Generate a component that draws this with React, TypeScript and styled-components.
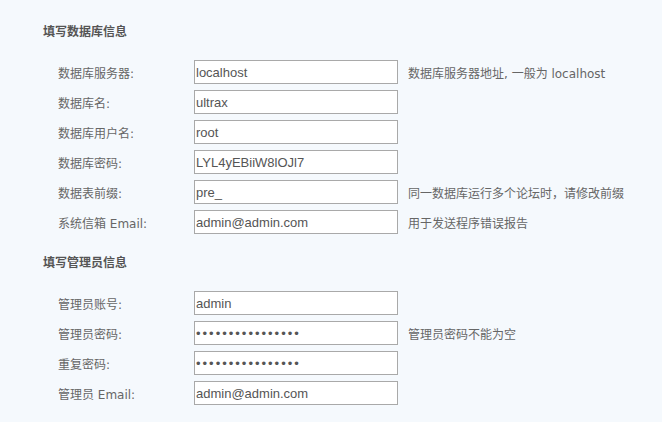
import React from "react";
import styled, { createGlobalStyle } from "styled-components";

const Global = createGlobalStyle`
  html, body {
    margin: 0;
    padding: 0;
    background: #f5f9fd;
  }
  body {
    font-family: "DejaVu Sans", "Noto Sans CJK SC", sans-serif;
    color: #666;
  }
`;

const Page = styled.div`
  width: 662px;
  height: 422px;
  box-sizing: border-box;
  padding: 22px 0 0 43px;
  background: #f5f9fd;
`;

const Section = styled.section`
  display: flex;
  flex-direction: column;
  & + & {
    margin-top: 19px;
  }
`;

const Title = styled.h2`
  margin: 0 0 18px;
  font-family: "DejaVu Sans", "Noto Sans CJK SC", sans-serif;
  font-size: 12px;
  line-height: 20px;
  font-weight: bold;
  color: #555;
`;

const Rows = styled.div`
  display: flex;
  flex-direction: column;
  gap: 6px;
  padding-left: 15px;
`;

const Row = styled.div`
  display: grid;
  grid-template-columns: 136px 204px auto;
  align-items: center;
  height: 24px;
`;

const Label = styled.label`
  font-family: "DejaVu Sans", "Noto Sans CJK SC", sans-serif;
  font-size: 12px;
  color: #666;
  white-space: nowrap;
`;

const Input = styled.input<{ $secret?: boolean }>`
  box-sizing: border-box;
  width: 204px;
  height: 24px;
  margin: 0;
  padding: 0 1px;
  border: 1px solid #a9a9a9;
  border-radius: 0;
  background: #fff;
  font-family: "Liberation Sans", sans-serif;
  font-size: 13px;
  color: #555;
  outline: none;
  letter-spacing: ${(p) => (p.$secret ? "2px" : "0")};
`;

const Hint = styled.span`
  margin-left: 10px;
  font-family: "DejaVu Sans", "Noto Sans CJK SC", sans-serif;
  font-size: 12px;
  color: #666;
  white-space: nowrap;
`;

type Field = { label: string; value: string; hint?: string; secret?: boolean };

const dbFields: Field[] = [
  { label: "数据库服务器:", value: "localhost", hint: "数据库服务器地址, 一般为 localhost" },
  { label: "数据库名:", value: "ultrax" },
  { label: "数据库用户名:", value: "root" },
  { label: "数据库密码:", value: "LYL4yEBiiW8lOJl7" },
  { label: "数据表前缀:", value: "pre_", hint: "同一数据库运行多个论坛时，请修改前缀" },
  { label: "系统信箱 Email:", value: "admin@admin.com", hint: "用于发送程序错误报告" },
];

const adminFields: Field[] = [
  { label: "管理员账号:", value: "admin" },
  { label: "管理员密码:", value: "1234567890123456", hint: "管理员密码不能为空", secret: true },
  { label: "重复密码:", value: "1234567890123456", secret: true },
  { label: "管理员 Email:", value: "admin@admin.com" },
];

const FieldRows = ({ fields }: { fields: Field[] }) => (
  <Rows>
    {fields.map((f) => (
      <Row key={f.label}>
        <Label>{f.label}</Label>
        <Input
          type={f.secret ? "password" : "text"}
          defaultValue={f.value}
          $secret={f.secret}
          readOnly
        />
        {f.hint ? <Hint>{f.hint}</Hint> : <span />}
      </Row>
    ))}
  </Rows>
);

export default function App() {
  return (
    <>
      <Global />
      <Page>
        <Section>
          <Title>填写数据库信息</Title>
          <FieldRows fields={dbFields} />
        </Section>
        <Section>
          <Title>填写管理员信息</Title>
          <FieldRows fields={adminFields} />
        </Section>
      </Page>
    </>
  );
}
